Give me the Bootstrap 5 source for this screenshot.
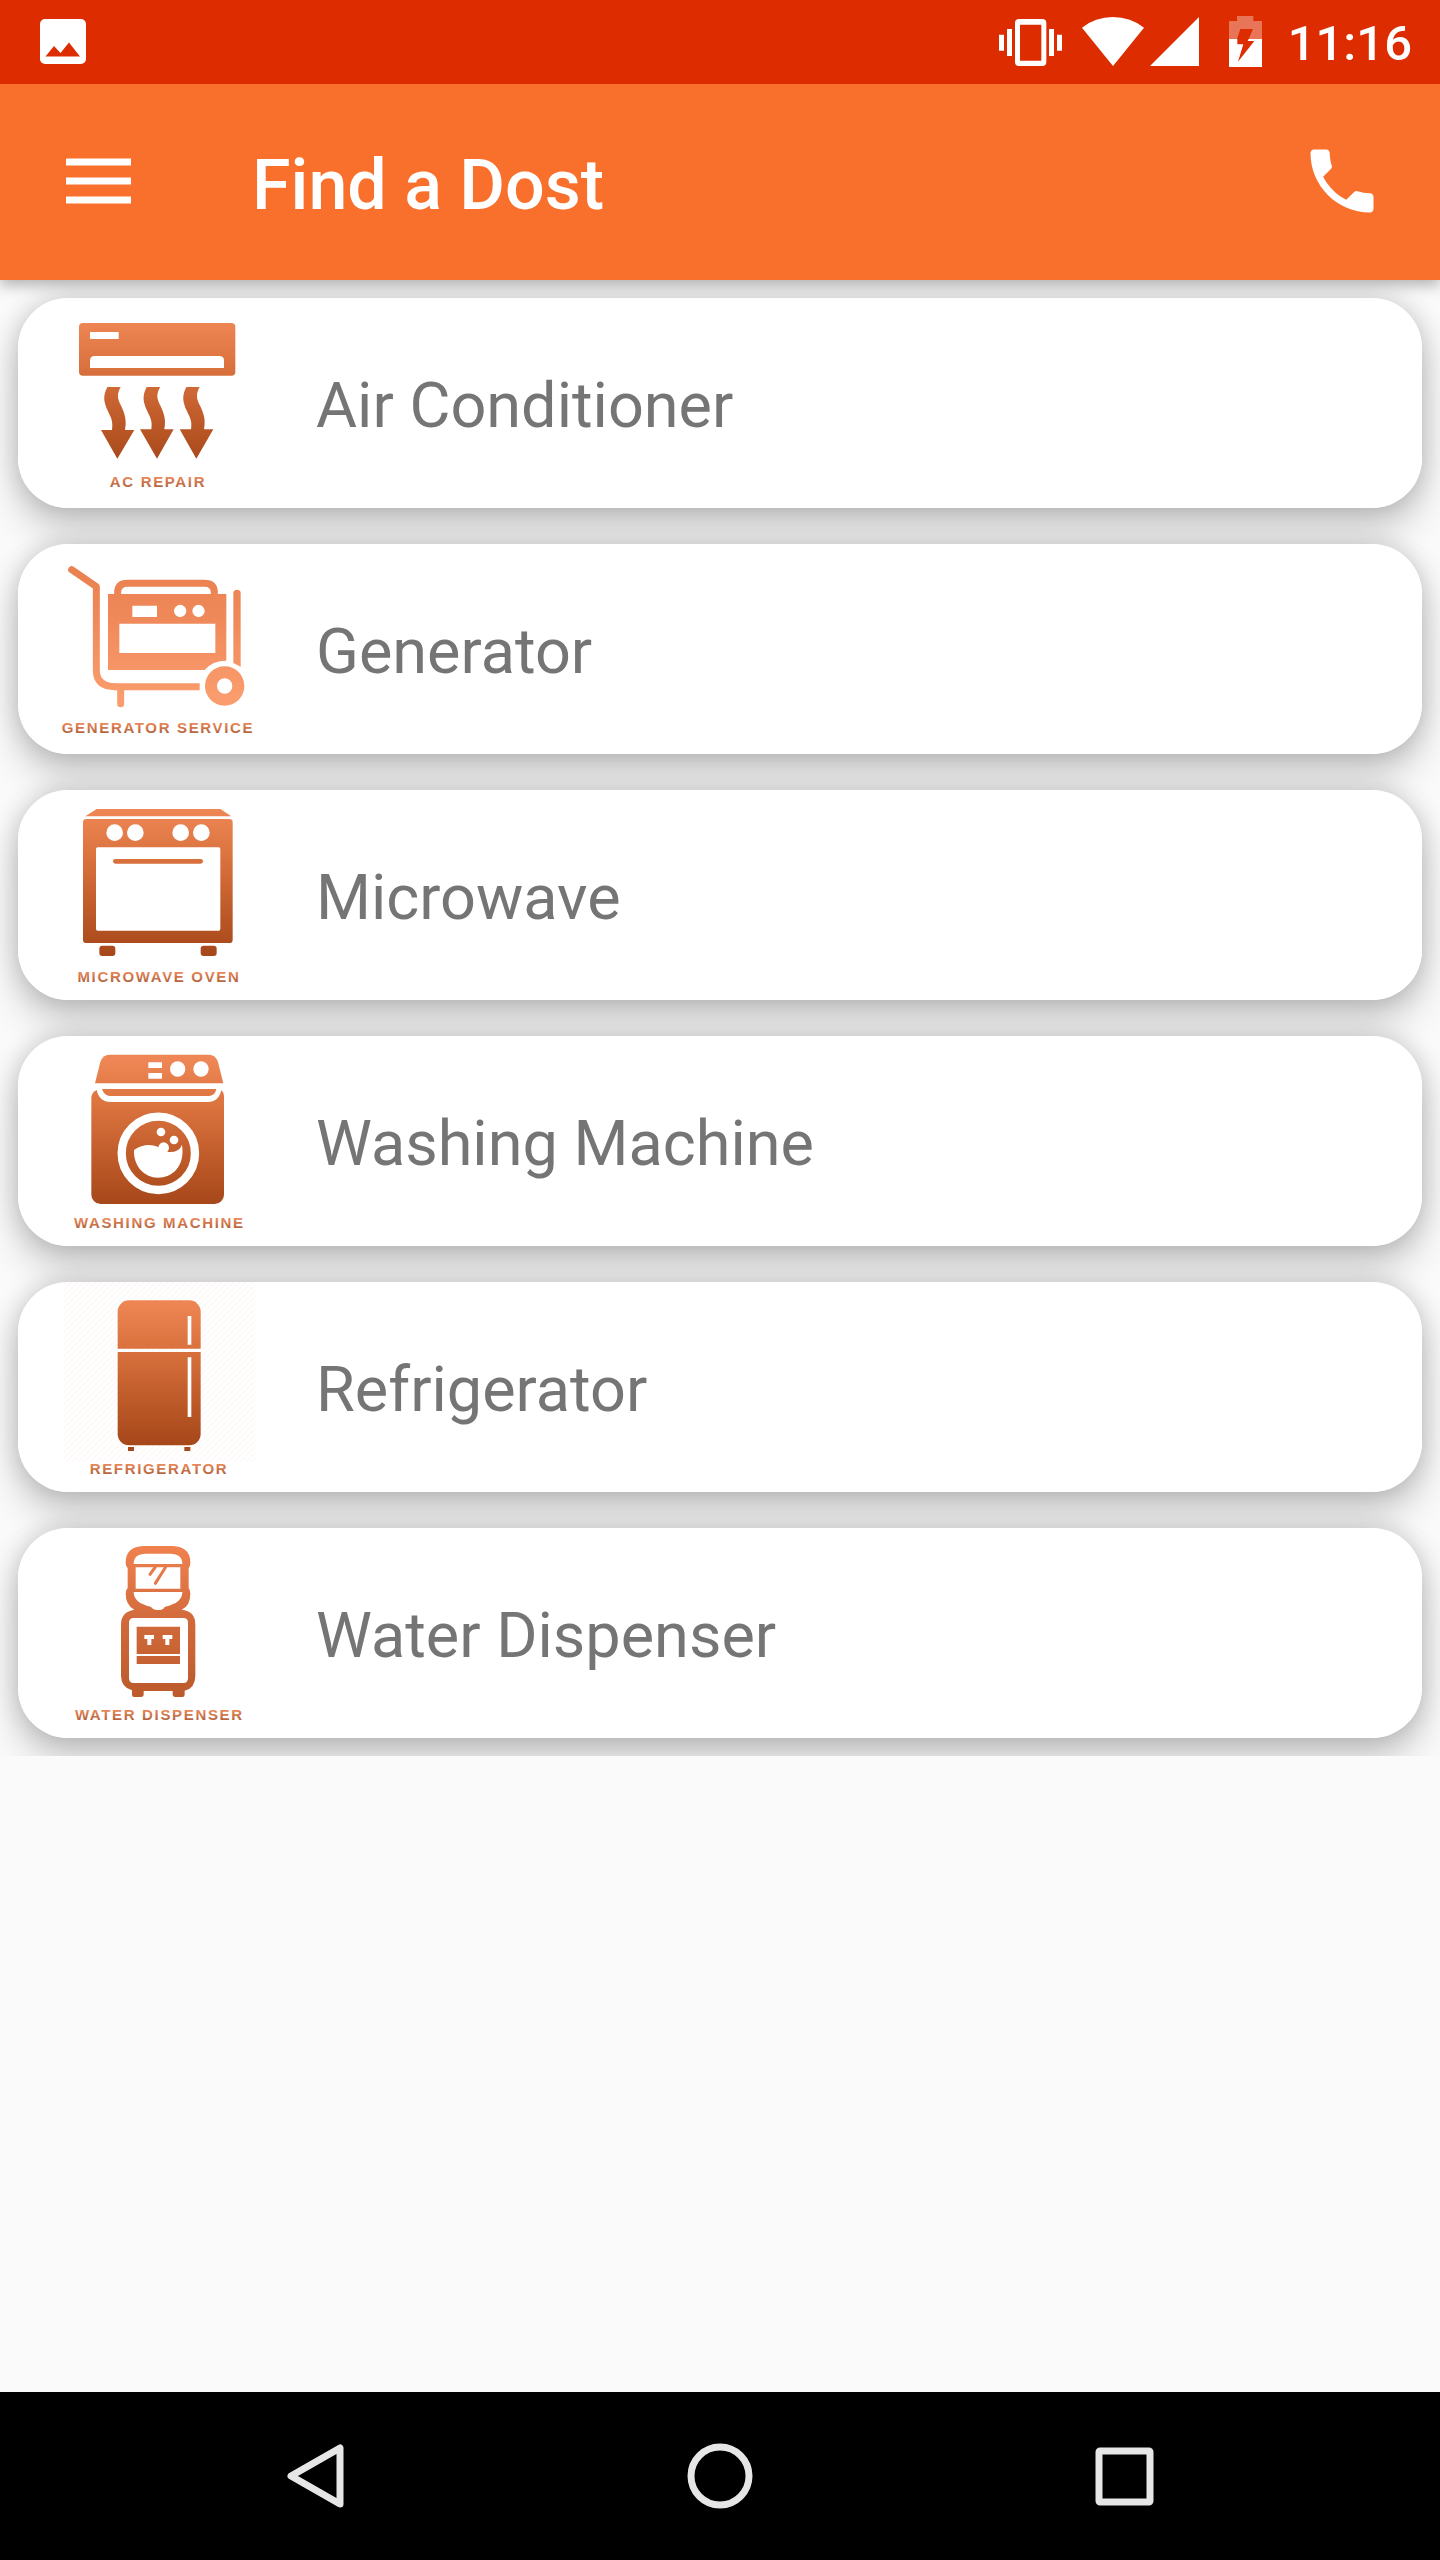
<!DOCTYPE html>
<html lang="en">
<head>
<meta charset="utf-8">
<meta name="viewport" content="width=device-width, initial-scale=1">
<title>Find a Dost</title>
<link href="https://cdn.jsdelivr.net/npm/bootstrap@5.3.0/dist/css/bootstrap.min.css" rel="stylesheet">
<style>
  body { background: #fafafa; font-family: Roboto, "Open Sans", sans-serif; }
  svg { display: block; flex-shrink: 0; }
  .status-bar { height: 84px; background: #dd2c00; padding: 0 28px 0 40px; z-index: 3; }
  .status-time { font-size: 49px; line-height: 60px; font-weight: 500; margin-left: 8px; padding-top: 4px; }
  .app-bar { height: 196px; background: #f9702c; padding: 0 56px 3px; box-shadow: 0 5px 14px rgba(0, 0, 0, .3); z-index: 2; }
  .app-title { font-size: 70px; line-height: 84px; font-weight: 500; margin-left: 112px; padding-top: 8px; }
  .service-list { isolation: isolate; }
  .service-list li { padding: 18px; }
  .service-item { border-radius: 50px; background: #fff; padding-left: 34px; color: #757575; font-size: 63px; line-height: 80px; }
  .service-item::before { content: ""; position: absolute; inset: 0; z-index: -1; border-radius: 50px;
    box-shadow: 0 22px 38px rgba(0, 0, 0, .19), 0 0 26px rgba(0, 0, 0, .18); }
  .service-name { margin-left: 54px; padding-top: 6px; }
  .service-icon text { font: bold 45px "Liberation Sans", Arial, sans-serif; letter-spacing: 5px; text-anchor: middle; fill: url(#caption); }
  .system-nav { height: 168px; background: #000; padding: 0 114px; }
</style>
</head>
<body class="d-flex flex-column min-vh-100">

<svg width="0" height="0" class="position-absolute" aria-hidden="true">
  <defs>
    <linearGradient id="copper" gradientUnits="userSpaceOnUse" x1="0" y1="90" x2="0" y2="520">
      <stop offset="0" stop-color="#ee8755"/><stop offset=".3" stop-color="#dc7440"/><stop offset=".75" stop-color="#ba5726"/><stop offset="1" stop-color="#a7481b"/>
    </linearGradient>
    <linearGradient id="peach" gradientUnits="userSpaceOnUse" x1="0" y1="110" x2="0" y2="500">
      <stop offset="0" stop-color="#e98050"/><stop offset=".4" stop-color="#f0895a"/><stop offset="1" stop-color="#fa9c6d"/>
    </linearGradient>
    <linearGradient id="clay" gradientUnits="userSpaceOnUse" x1="0" y1="110" x2="0" y2="560">
      <stop offset="0" stop-color="#f0814f"/><stop offset=".5" stop-color="#d16a3b"/><stop offset="1" stop-color="#bb5a2b"/>
    </linearGradient>
    <linearGradient id="caption" x1="0" y1="0" x2="0" y2="1">
      <stop offset=".2" stop-color="#ee8a5b"/><stop offset=".8" stop-color="#b5653f"/>
    </linearGradient>
    <pattern id="stripes" width="18" height="18" patternUnits="userSpaceOnUse">
      <path d="M-3 21 21-3M-3 3 3-3M15 21l6-6" stroke="#fdf9f7" stroke-width="4"/>
    </pattern>
  </defs>
</svg>

<div class="status-bar position-relative d-flex align-items-center text-white">
  <svg width="46" height="46" viewBox="0 0 46 46" aria-label="Screenshot saved" role="img">
    <path fill="#fff" fill-rule="evenodd" d="M5 0h36a5 5 0 0 1 5 5v35a5 5 0 0 1-5 5H5a5 5 0 0 1-5-5V5a5 5 0 0 1 5-5zM5.500 37.500h34.500L29 23.500 20.500 34 14 27z"/>
  </svg>
  <svg class="ms-auto" width="290" height="84" viewBox="90 0 870 252" aria-label="Vibrate, Wi-Fi, mobile signal, battery charging" role="img" fill="#fff">
    <path d="M117 104h15v48h-15zM141 87h15v81h-15zM267 87h15v81h-15zM291 104h15v48h-15z"/>
    <path fill-rule="evenodd" d="M177 57h70a12 12 0 0 1 12 12v117a12 12 0 0 1-12 12h-70a12 12 0 0 1-12-12V69a12 12 0 0 1 12-12zm3 17v108h64V74z"/>
    <path d="M366 83Q406 51 459 51t93 32L459 198z"/>
    <path d="M570 198 717 51v147z"/>
    <path fill-opacity=".35" d="M831 48h49v15h26v54h-40l13-30h-38l-10 30h-24V63h24z"/>
    <path d="M807 117h25v16h18l-16 52 49-62h-20l3-6h40v84h-99z"/>
  </svg>
  <span class="status-time">11:16</span>
</div>

<header class="app-bar navbar navbar-dark flex-nowrap position-relative text-white">
  <button type="button" class="btn p-0 border-0" aria-label="Open menu">
    <svg width="84" height="84" viewBox="0 0 84 84" stroke="#fff" stroke-width="7"><path d="M10 23h65M10 42h65M10 61h65"/></svg>
  </button>
  <h1 class="app-title mb-0 me-auto">Find a Dost</h1>
  <button type="button" class="btn p-0 border-0" aria-label="Call">
    <svg width="84" height="84" viewBox="0 0 24 24" fill="#fff"><path d="M6.620 10.790c1.440 2.830 3.760 5.140 6.590 6.590l2.200-2.200c.27-.27.67-.36 1.020-.24 1.120.37 2.330.57 3.570.57.55 0 1 .45 1 1V20c0 .55-.45 1-1 1-9.390 0-17-7.610-17-17 0-.55.45-1 1-1h3.500c.55 0 1 .45 1 1 0 1.250.2 2.450.57 3.570.11.35.03.74-.25 1.020l-2.200 2.200z"/></svg>
  </button>
</header>

<main class="flex-grow-1">
  <ul class="service-list list-unstyled mb-0 overflow-hidden">
    <li>
      <a href="#" class="service-item d-flex align-items-center position-relative text-decoration-none">
        <svg class="service-icon" width="210" height="210" viewBox="156 24 630 630">
          <g fill="url(#copper)">
            <path fill-rule="evenodd" d="M249 99h445a12 12 0 0 1 12 12v134a12 12 0 0 1-12 12H249a12 12 0 0 1-12-12V111a12 12 0 0 1 12-12zm21 27v21h86v-21zm0 108h402v-22q0-14-14-14H284q-14 0-14 14z"/>
            <path d="M322 291h40c-12 22-10 34 2 58 12 26 16 44 11 71h28l-51 86-49-86h33c4-28-4-38-12-56-13-28-16-46-2-73z"/>
            <path d="M440 291h41c-13 22-11 34 1 58 12 26 16 42 11 69h28l-50 88-51-88h34c4-26-4-36-12-54-13-28-16-46-2-73z"/>
            <path d="M559 291h40c-12 22-10 34 2 58 12 26 16 42 11 69h28l-51 88-50-88h34c4-26-4-36-12-54-13-28-16-46-2-73z"/>
          </g>
          <text x="474" y="591">AC REPAIR</text>
        </svg>
        <span class="service-name">Air Conditioner</span>
      </a>
    </li>
    <li>
      <a href="#" class="service-item d-flex align-items-center position-relative text-decoration-none">
        <svg class="service-icon" width="210" height="210" viewBox="156 42 630 630">
          <g fill="none" stroke="url(#peach)" stroke-width="21" stroke-linecap="round">
            <path stroke-linejoin="round" d="M215 119l74 51v250q0 50 57 50"/>
            <path stroke-linecap="butt" d="M342 470h257M353 196v-8q0-28 30-28h230q30 0 30 28v8"/>
            <path d="M362 474v47"/>
          </g>
          <g fill="url(#peach)">
            <path fill-rule="evenodd" d="M324 192h355v200q-42 0-65 28H324zm73 35v34h74v-34zm-39 54v88h288v-88zM522 243a18 18 0 0 0 37 0 18 18 0 0 0-37 0zm55 0a18 18 0 0 0 37 0 18 18 0 0 0-37 0z"/>
            <path d="M700 190a11 11 0 0 1 22 0v220l-22-11z"/>
            <path fill-rule="evenodd" d="M615 468a59 59 0 0 0 118 0 59 59 0 0 0-118 0zm36 0a23 23 0 0 1 46 0 23 23 0 0 1-46 0z"/>
          </g>
          <text x="474" y="609">GENERATOR SERVICE</text>
        </svg>
        <span class="service-name">Generator</span>
      </a>
    </li>
    <li>
      <a href="#" class="service-item d-flex align-items-center position-relative text-decoration-none">
        <svg class="service-icon" width="210" height="210" viewBox="156 30 630 630">
          <g fill="url(#copper)">
            <path d="M256 109l34-22h371l33 22z"/>
            <path fill-rule="evenodd" d="M259 117h429a10 10 0 0 1 10 10v352a10 10 0 0 1-10 10H259a10 10 0 0 1-10-10V127a10 10 0 0 1 10-10zm34 85q-5 0-5 5v240q0 5 5 5h363q5 0 5-5V207q0-5-5-5z"/>
            <rect x="339" y="237" width="270" height="14" rx="7"/>
            <rect x="298" y="497" width="48" height="31" rx="9"/>
            <rect x="602" y="497" width="48" height="31" rx="9"/>
          </g>
          <g fill="#fff"><circle cx="344" cy="158" r="25"/><circle cx="406" cy="158" r="25"/><circle cx="542" cy="158" r="25"/><circle cx="604" cy="158" r="25"/></g>
          <text x="477" y="606">MICROWAVE OVEN</text>
        </svg>
        <span class="service-name">Microwave</span>
      </a>
    </li>
    <li>
      <a href="#" class="service-item d-flex align-items-center position-relative text-decoration-none">
        <svg class="service-icon" width="210" height="210" viewBox="156 18 630 630">
          <g fill="url(#copper)">
            <path d="M285 160l16-64q7-22 28-22h297q21 0 28 22l16 64z"/>
            <path d="M306 177h343q-4 21-23 21H330q-17 0-24-21z"/>
            <path d="M290 180q8 36 42 36h292q32 0 40-36 8 8 8 18v296a28 28 0 0 1-28 28H302a28 28 0 0 1-28-28V202q2-16 16-22z"/>
          </g>
          <g fill="#fff">
            <path d="M445 97h41v17h-41zM445 129h41v17h-41z"/>
            <circle cx="533" cy="117" r="23"/><circle cx="603" cy="117" r="23"/>
            <circle cx="483" cy="306" r="13"/><circle cx="522" cy="330" r="13"/><circle cx="491" cy="353" r="16"/>
            <path d="M402 360q36-24 73-9l29 15q34 2 42-22c10 66-30 99-72 99-40 0-74-33-72-83z"/>
          </g>
          <circle cx="475" cy="370" r="110" fill="none" stroke="#fff" stroke-width="25"/>
          <text x="478" y="595">WASHING MACHINE</text>
        </svg>
        <span class="service-name">Washing Machine</span>
      </a>
    </li>
    <li>
      <a href="#" class="service-item d-flex align-items-center position-relative text-decoration-none">
        <svg class="service-icon" width="210" height="210" viewBox="156 36 630 630">
          <path fill="url(#stripes)" d="M192 36h574v540H192z"/>
          <g fill="url(#copper)">
            <path d="M353 236V125a34 34 0 0 1 34-34h181a34 34 0 0 1 34 34v111zM353 246h249v246a34 34 0 0 1-34 34H387a34 34 0 0 1-34-34zM384 531h18v12h-18zM553 531h18v12h-18z"/>
          </g>
          <path fill="#fff" d="M563 138h11v86h-11zM563 262h11v179h-11z"/>
          <text x="477" y="612">REFRIGERATOR</text>
        </svg>
        <span class="service-name">Refrigerator</span>
      </a>
    </li>
    <li>
      <a href="#" class="service-item d-flex align-items-center position-relative text-decoration-none">
        <svg class="service-icon" width="210" height="210" viewBox="156 54 630 630">
          <g fill="url(#clay)">
            <path fill-rule="evenodd" d="M430 108h88q53 2 53 50 0 10-5 17v59q5 5 5 17 0 36-26 48 41 4 41 44v154q0 37-32 45v12q0 7-7 7h-21q-8 0-8-8v-10h-87v10q0 8-8 8h-21q-6 0-6-7v-13q-33-10-33-44V343q0-38 40-44-26-14-26-48 0-12 6-17v-59q-6-7-6-17 0-48 53-50zm-29 54h146q0-31-37-31h-72q-37 0-37 31zm6 10v64h134v-64zm-6 74q0 33 51 44 8 10 17 10h12q8 0 14-10 52-11 52-44zm0 78q-14 0-14 14v167q0 14 14 14h149q14 0 14-14V338q0-14-14-14z"/>
            <path d="M410 350h130v82H410zM410 438h130v24H410z"/>
          </g>
          <path fill="none" stroke="url(#clay)" stroke-width="9" stroke-linecap="round" d="M466 171l-16 22M497 171l-31 49"/>
          <path fill="#fff" d="M433 375h29v12h-8v18h-12v-18h-9zM488 375h29v12h-9v18h-12v-18h-8z"/>
          <text x="478" y="630">WATER DISPENSER</text>
        </svg>
        <span class="service-name">Water Dispenser</span>
      </a>
    </li>
  </ul>
</main>

<nav class="system-nav d-flex align-items-center" aria-label="System navigation">
  <button type="button" class="btn flex-fill w-100 p-0 border-0 d-flex justify-content-center" aria-label="Back">
    <svg width="66" height="66" viewBox="0 0 66 66" fill="none" stroke="#e6e6e6" stroke-width="7" stroke-linejoin="round"><path d="M57 5v56L8 33z"/></svg>
  </button>
  <button type="button" class="btn flex-fill w-100 p-0 border-0 d-flex justify-content-center" aria-label="Home">
    <svg width="66" height="66" viewBox="0 0 66 66" fill="none" stroke="#e6e6e6" stroke-width="7"><circle cx="33" cy="33" r="29"/></svg>
  </button>
  <button type="button" class="btn flex-fill w-100 p-0 border-0 d-flex justify-content-center" aria-label="Recent apps">
    <svg width="66" height="66" viewBox="0 0 66 66" fill="none" stroke="#e6e6e6" stroke-width="7"><rect x="8" y="8" width="51" height="51" rx="1"/></svg>
  </button>
</nav>

<script src="https://cdn.jsdelivr.net/npm/bootstrap@5.3.0/dist/js/bootstrap.bundle.min.js"></script>
</body>
</html>
